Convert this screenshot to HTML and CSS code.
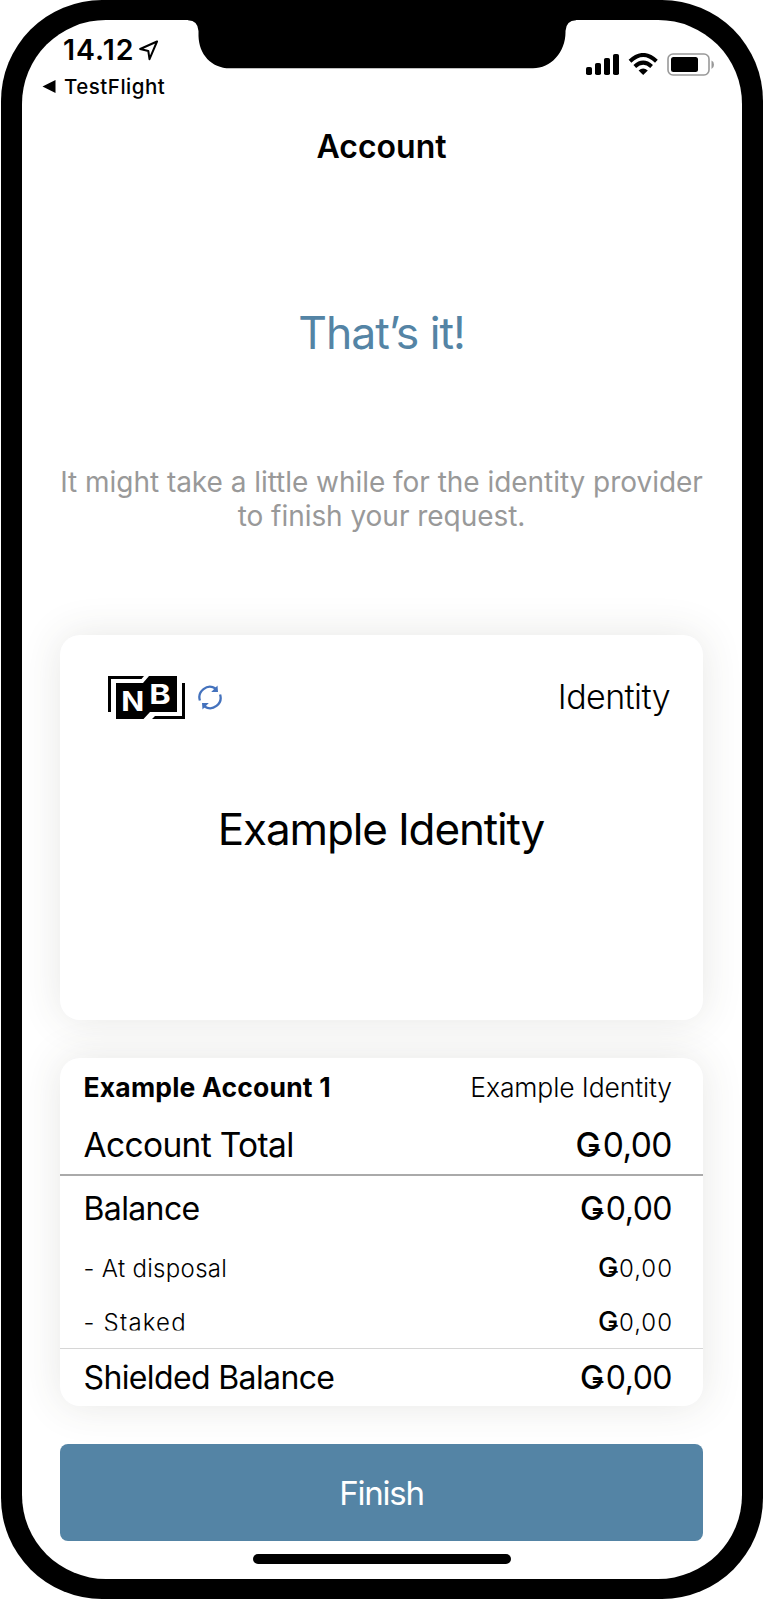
FILE: index.html
```html
<!DOCTYPE html>
<html lang="en">
<head>
<meta charset="utf-8">
<title>Account</title>
<link rel="stylesheet" href="styles.css">
</head>
<body>
<div class="phone">
  <svg class="notch" width="388" height="49" viewBox="0 0 388 49"><path d="M0 0H388V.2Q378 .5 377.500 11C378 32 363 48.300 345 48.300H42C23 48.300 11 34 10.500 16V11Q10 .5 0 .2Z"/></svg>
  <div class="screen">
    <header class="status">
      <div class="status-left">
        <div class="clock"><span class="time">14.12</span>
          <svg class="arrow" width="20" height="21" viewBox="0 0 20 21"><path d="M18 1.500L1.200 9L9.300 11L10.500 19.200Z" fill="none" stroke="#000" stroke-width="2" stroke-linejoin="round"/></svg>
        </div>
        <div class="back"><svg width="14" height="13" viewBox="0 0 14 13"><path d="M.5 6.500L13.500 0V13Z"/></svg><span class="app">TestFlight</span></div>
      </div>
      <svg class="indicators" width="130" height="24" viewBox="0 0 130 24">
        <rect x="0" y="14" width="6" height="8" rx="1.800"/><rect x="9" y="10" width="6" height="12" rx="1.800"/><rect x="18" y="5" width="6" height="17" rx="1.800"/><rect x="27" y="1" width="6" height="21" rx="1.800"/>
        <g fill="none" stroke="#000" stroke-width="4"><path d="M44 8.200Q57.200-4.200 70.400 8.200"/><path d="M48.800 13.400Q57.200 5.800 65.600 13.400"/></g>
        <path d="M57.200 22L52.600 17.400Q57.200 13.800 61.800 17.400Z"/>
        <rect x="82" y="1" width="41" height="21" rx="5" fill="none" stroke="#999" stroke-width="1.600"/>
        <rect x="85" y="4" width="27" height="15" rx="2.500"/>
        <path d="M125.500 7.500Q128 8.500 128 11.700T125.500 16Z" fill="#999"/>
      </svg>
    </header>
    <h1 class="title">Account</h1>
    <h2 class="headline">That’s it!</h2>
    <p class="message">It might take a little while for the identity provider<br>to finish your request.</p>

    <section class="card identity">
      <div class="identity-top">
        <div class="marks">
          <svg class="logo" width="78" height="44" viewBox="0 0 78 44">
            <path d="M0 0H36L33.500 3H3V36H0Z"/>
            <path d="M41 0H69V36H42L35.500 43H8V7H35Z"/>
            <path d="M44 43L47 40H74V7H77V43Z"/>
            <text x="13.300" y="35" class="mark" textLength="23" lengthAdjust="spacingAndGlyphs">N</text>
            <text x="41.300" y="27.800" class="mark" textLength="21.500" lengthAdjust="spacingAndGlyphs">B</text>
          </svg>
          <svg class="sync" width="24" height="25" viewBox="0 0 24 25"><g fill="none" stroke="#4472bd" stroke-width="2.300"><path d="M1.900 15.500A10.500 10.500 0 0 1 17.500 3.500"/><path d="M22.100 9.500A10.500 10.500 0 0 1 6.500 21.500"/></g><path d="M13.200 7L20 7L19.500 .5Z M10.800 18L4 18L4.500 24.500Z" fill="#4472bd"/></svg>
        </div>
        <span class="kind">Identity</span>
      </div>
      <div class="identity-name">Example Identity</div>
    </section>

    <section class="card account">
      <div class="row head"><span class="acct">Example Account 1</span><span class="owner">Example Identity</span></div>
      <div class="row total"><span class="label">Account Total</span><span class="amount"><b>Ǥ</b>0,00</span></div>
      <div class="row main"><span class="label">Balance</span><span class="amount"><b>Ǥ</b>0,00</span></div>
      <div class="row sub"><span class="label">- At disposal</span><span class="amount"><b>Ǥ</b>0,00</span></div>
      <div class="row sub staked"><span class="label">- Staked</span><span class="amount"><b>Ǥ</b>0,00</span></div>
      <div class="row main shielded"><span class="label">Shielded Balance</span><span class="amount"><b>Ǥ</b>0,00</span></div>
    </section>

    <button class="finish">Finish</button>
    <div class="home"></div>
  </div>
</div>
</body>
</html>
```
FILE: styles.css
```css
* { box-sizing: border-box; }
body { margin: 0; background: #fff; font-family: Inter, "Liberation Sans", sans-serif; color: #000; }
.phone { position: relative; width: 762px; height: 1599px; margin: 0 1px 1px; padding: 20px 21px; background: #000; border-radius: 101px; }
.notch { position: absolute; left: 187px; top: 20px; }
.screen { width: 720px; height: 1559px; background: #fff; border-radius: 84px; padding: 0 39px 0 38px; overflow: hidden; display: flex; flex-direction: column; }
.status { display: flex; justify-content: space-between; height: 97px; margin: 0 -13px 0 -18px; padding-top: 14px; }
.clock { display: flex; align-items: center; height: 32px; padding-left: 21px; gap: 5px; }
.time { margin-bottom: 2px; font-size: 28.5px; font-weight: 600; letter-spacing: 1px; }
.back { display: flex; align-items: center; height: 32px; margin-top: 4px; gap: 8px; font-size: 20.5px; font-weight: 500; letter-spacing: .5px; }
.indicators { margin-top: 19px; }
.title { margin: 0; height: 60px; line-height: 60px; text-align: center; font-size: 32px; font-weight: 600; }
.headline { margin: 126px 0 0; height: 60px; line-height: 60px; text-align: center; font-size: 44.5px; font-weight: 400; letter-spacing: -1.05px; color: #5484a5; }
.message { margin: 101.5px -10px 0; line-height: 34px; font-size: 28px; letter-spacing: -.04px; color: #999; text-align: center; white-space: nowrap; }
.card { background: #fff; border-radius: 20px; box-shadow: 0 0 40px rgba(60, 60, 50, .125); }
.identity { flex: none; height: 385px; margin-top: 102.5px; padding: 41px 33px 0 48px; }
.identity-top { display: flex; justify-content: space-between; align-items: center; height: 44px; }
.marks { display: flex; align-items: center; gap: 12px; }
.sync { margin-bottom: 2px; }
.mark { font: 700 27px Inter, sans-serif; fill: #fff; }
.kind { margin-bottom: 3px; font-size: 34px; font-weight: 300; letter-spacing: -.6px; }
.identity-name { margin: 79px -32px 0 -48px; height: 60px; line-height: 60px; text-align: center; font-size: 44px; letter-spacing: -1.15px; }
.account { flex: none; height: 348px; margin-top: 38px; }
.row { display: flex; justify-content: space-between; align-items: center; padding: 0 31px 0 23.5px; white-space: nowrap; }
.row b { font-weight: 500; }
.head { height: 58px; font-size: 26.5px; }
.acct { font-weight: 700; letter-spacing: .2px; }
.owner { font-weight: 300; letter-spacing: -.12px; }
.total { height: 60px; font-size: 33.5px; border-bottom: 2px solid #aaa; }
.total .label { letter-spacing: -.65px; }
.total .amount, .main .amount { letter-spacing: -.5px; }
.total b, .main b { letter-spacing: 2px; }
.main { height: 64px; font-size: 32px; }
.main .label { letter-spacing: -.63px; }
.sub { height: 57px; font-size: 24px; font-weight: 300; }
.sub .label { letter-spacing: .32px; }
.sub .amount { letter-spacing: 1px; margin-right: -1px; }
.sub b { font-size: 27px; line-height: 1; letter-spacing: .8px; }
.staked { height: 52px; border-bottom: 1px solid #d6d6d6; }
.staked .label { letter-spacing: 1.2px; clip-path: inset(0 0 6.5px 0); }
.shielded { height: 57px; }
.finish { flex: none; height: 97px; margin-top: 38px; border: 0; border-radius: 8px; background: #5484a5; color: #fff; font: 400 33px Inter, sans-serif; letter-spacing: -1.2px; }
.home { flex: none; width: 258px; height: 10px; margin: 13px auto 0; border-radius: 5px; background: #000; }
```
